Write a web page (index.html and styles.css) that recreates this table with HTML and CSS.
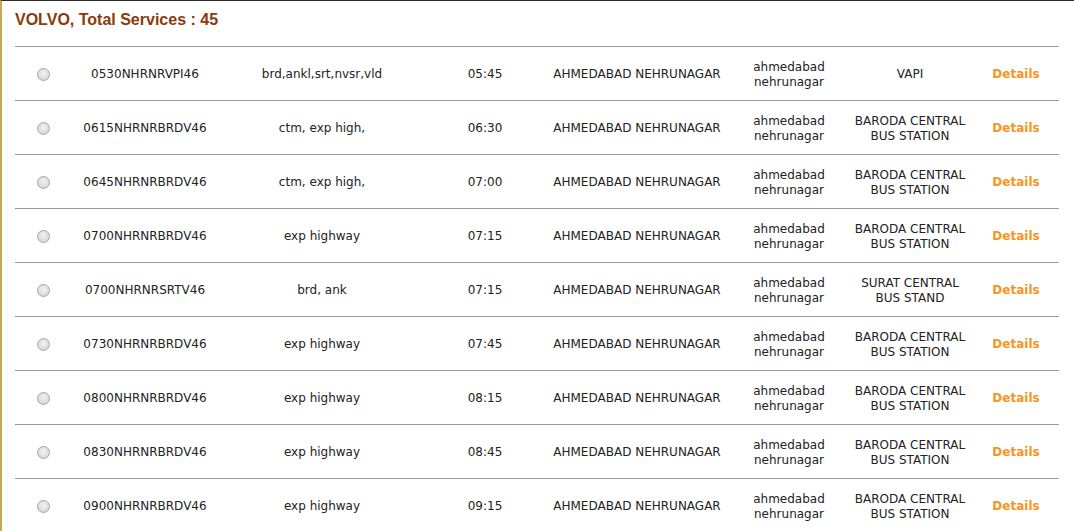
FILE: index.html
```html
<!DOCTYPE html>
<html>
<head>
<meta charset="utf-8">
<link rel="stylesheet" href="styles.css">
</head>
<body>
<div class="page">
  <h2 class="title">VOLVO, Total Services : 45</h2>
  <div class="list">
    <div class="row"><span class="radio"></span><span>0530NHRNRVPI46</span><span>brd,ankl,srt,nvsr,vld</span><span>05:45</span><span>AHMEDABAD NEHRUNAGAR</span><span>ahmedabad<br>nehrunagar</span><span>VAPI</span><a class="details">Details</a></div>
    <div class="row"><span class="radio"></span><span>0615NHRNRBRDV46</span><span>ctm, exp high,</span><span>06:30</span><span>AHMEDABAD NEHRUNAGAR</span><span>ahmedabad<br>nehrunagar</span><span>BARODA CENTRAL<br>BUS STATION</span><a class="details">Details</a></div>
    <div class="row"><span class="radio"></span><span>0645NHRNRBRDV46</span><span>ctm, exp high,</span><span>07:00</span><span>AHMEDABAD NEHRUNAGAR</span><span>ahmedabad<br>nehrunagar</span><span>BARODA CENTRAL<br>BUS STATION</span><a class="details">Details</a></div>
    <div class="row"><span class="radio"></span><span>0700NHRNRBRDV46</span><span>exp highway</span><span>07:15</span><span>AHMEDABAD NEHRUNAGAR</span><span>ahmedabad<br>nehrunagar</span><span>BARODA CENTRAL<br>BUS STATION</span><a class="details">Details</a></div>
    <div class="row"><span class="radio"></span><span>0700NHRNRSRTV46</span><span>brd, ank</span><span>07:15</span><span>AHMEDABAD NEHRUNAGAR</span><span>ahmedabad<br>nehrunagar</span><span>SURAT CENTRAL<br>BUS STAND</span><a class="details">Details</a></div>
    <div class="row"><span class="radio"></span><span>0730NHRNRBRDV46</span><span>exp highway</span><span>07:45</span><span>AHMEDABAD NEHRUNAGAR</span><span>ahmedabad<br>nehrunagar</span><span>BARODA CENTRAL<br>BUS STATION</span><a class="details">Details</a></div>
    <div class="row"><span class="radio"></span><span>0800NHRNRBRDV46</span><span>exp highway</span><span>08:15</span><span>AHMEDABAD NEHRUNAGAR</span><span>ahmedabad<br>nehrunagar</span><span>BARODA CENTRAL<br>BUS STATION</span><a class="details">Details</a></div>
    <div class="row"><span class="radio"></span><span>0830NHRNRBRDV46</span><span>exp highway</span><span>08:45</span><span>AHMEDABAD NEHRUNAGAR</span><span>ahmedabad<br>nehrunagar</span><span>BARODA CENTRAL<br>BUS STATION</span><a class="details">Details</a></div>
    <div class="row"><span class="radio"></span><span>0900NHRNRBRDV46</span><span>exp highway</span><span>09:15</span><span>AHMEDABAD NEHRUNAGAR</span><span>ahmedabad<br>nehrunagar</span><span>BARODA CENTRAL<br>BUS STATION</span><a class="details">Details</a></div>
  </div>
</div>
</body>
</html>
```
FILE: styles.css
```css
html, body {
  margin: 0;
  padding: 0;
  background: #fff;
}
.page {
  border-top: 1px solid #2b2b2b;
  border-left: 2px solid #c9a656;
  padding: 0 15px 0 13px;
  min-height: 530px;
  box-sizing: border-box;
}
.title {
  margin: 0;
  height: 45px;
  padding-top: 9px;
  box-sizing: border-box;
  font-family: "Liberation Sans", Arial, sans-serif;
  font-size: 16px;
  font-weight: bold;
  color: #8a3a0c;
  line-height: 19px;
}
.list {
  width: 1044px;
}
.row {
  display: grid;
  grid-template-columns: 56px 148px 206px 120px 184px 120px 122px 88px;
  align-items: center;
  height: 54px;
  padding-top: 2px;
  box-sizing: border-box;
  border-top: 1px solid #999;
  font-family: "DejaVu Sans", Verdana, sans-serif;
  font-size: 12px;
  line-height: 15px;
  color: #222;
  text-align: center;
}
.radio {
  justify-self: center;
  width: 11px;
  height: 11px;
  border-radius: 50%;
  border: 1px solid #a8a8a8;
  background: radial-gradient(circle at 50% 40%, #f2f2f2 0%, #dcdcdc 60%, #cfcfcf 100%);
  margin-left: 0;
}
.details {
  font-family: "DejaVu Sans", Verdana, sans-serif;
  font-weight: bold;
  font-size: 12px;
  color: #f7941d;
  padding-left: 2px;
}
```
